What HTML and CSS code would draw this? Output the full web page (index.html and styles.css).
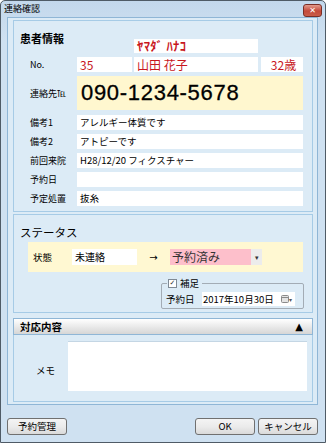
FILE: index.html
```html
<!DOCTYPE html>
<html lang="ja">
<head>
  <meta charset="UTF-8">
  <title>連絡確認</title>
  <link rel="stylesheet" href="styles.css">
</head>
<body>
  <div class="window">
    <div class="titlebar">
      <span class="title">連絡確認</span>
      <span class="close">✕</span>
    </div>

    <div class="client">
      <div class="content">

        <!-- 患者情報 -->
        <section class="panel patient">
          <div class="head-row">
            <h2>患者情報</h2>
            <div class="field kana red">ﾔﾏﾀﾞ ﾊﾅｺ</div>
          </div>
          <div class="row">
            <label>No.</label>
            <div class="field no red">35</div>
            <div class="field name red">山田 花子</div>
            <div class="field age red">32歳</div>
          </div>
          <div class="row tel-row">
            <label>連絡先℡</label>
            <div class="field tel">090-1234-5678</div>
          </div>
          <div class="row first">
            <label>備考1</label>
            <div class="field">アレルギー体質です</div>
          </div>
          <div class="row">
            <label>備考2</label>
            <div class="field">アトピーです</div>
          </div>
          <div class="row">
            <label>前回来院</label>
            <div class="field">H28/12/20 フィクスチャー</div>
          </div>
          <div class="row">
            <label>予約日</label>
            <div class="field"></div>
          </div>
          <div class="row">
            <label>予定処置</label>
            <div class="field">抜糸</div>
          </div>
        </section>

        <!-- ステータス -->
        <section class="panel status">
          <h2 class="plain">ステータス</h2>
          <div class="status-band">
            <span class="status-label">状態</span>
            <div class="field current">未連絡</div>
            <span class="arrow">→</span>
            <div class="combo">
              <div class="combo-value">予約済み</div>
              <div class="combo-btn">▾</div>
            </div>
          </div>
          <div class="groupbox">
            <span class="legend"><span class="check">✓</span>補足</span>
            <span class="gb-label">予約日</span>
            <div class="date-field">
              <span>2017年10月30日</span>
              <span class="cal">
                <svg width="8" height="8" viewBox="0 0 8 8"><rect x="0.5" y="0.5" width="7" height="7" rx="1" fill="#e4e4e4" stroke="#8a8a8a"/><line x1="1" y1="2.5" x2="7" y2="2.5" stroke="#8a8a8a"/></svg>
                <span class="cal-arrow">▾</span>
              </span>
            </div>
          </div>
        </section>

        <!-- 対応内容 -->
        <div class="section-head">
          <span>対応内容</span>
          <span class="toggle">▲</span>
        </div>
        <section class="panel memo">
          <label>メモ</label>
          <div class="textarea"></div>
        </section>

      </div>

      <div class="buttons">
        <button class="btn">予約管理</button>
        <span class="spacer"></span>
        <button class="btn">OK</button>
        <button class="btn">キャンセル</button>
      </div>
    </div>
  </div>
</body>
</html>
```

FILE: styles.css
```css
html, body {
  margin: 0;
  padding: 0;
}

body {
  font-family: "Noto Sans CJK JP", "Noto Sans", sans-serif;
  font-size: 9px;
  color: #000;
  background: #fff;
}

.window {
  width: 326px;
  height: 443px;
  box-sizing: border-box;
  border: 1px solid #4f5b66;
  border-radius: 5px 5px 0 0;
  background: linear-gradient(#c3d8ec, #cfe1f1 40px, #cfe1f1);
  display: flex;
  flex-direction: column;
}

.titlebar {
  height: 16px;
  display: flex;
  align-items: center;
  padding: 0 3px 0 3px;
}

.title {
  flex: 1;
  font-size: 9px;
  line-height: 10px;
  margin-top: -1px;
}

.close {
  width: 17px;
  height: 11px;
  margin-top: 2px;
  border: 1px solid #7a2e26;
  border-radius: 3px;
  background: linear-gradient(#e39b8c, #c4493a 55%, #c95c48);
  color: #fff;
  font-size: 8px;
  font-weight: bold;
  line-height: 11px;
  text-align: center;
  font-family: "DejaVu Sans", sans-serif;
}

.client {
  flex: 1;
  padding: 0 7px 0 6px;
  display: flex;
  flex-direction: column;
}

.content {
  border: 1px solid #8fb6d6;
  background: #dcebf6;
  padding: 2px 4px 2px 5px;
}

.panel {
  border: 1px solid #a6cbe6;
  background: #dcebf6;
}

h2 {
  margin: 0;
  font-size: 11px;
  font-weight: bold;
  line-height: 14px;
}

h2.plain {
  font-weight: normal;
  font-size: 11.5px;
}

.red {
  color: #c8161d;
}

.field {
  background: #fff;
  height: 15px;
  line-height: 15px;
  box-sizing: border-box;
  padding-left: 3px;
  flex: 1;
  font-size: 9.5px;
  white-space: nowrap;
  overflow: hidden;
}

/* 患者情報 */
.patient {
  height: 192px;
  box-sizing: border-box;
  padding: 10px 9px 0 16px;
}

.head-row {
  display: flex;
  align-items: flex-start;
}

.head-row h2 {
  width: 114px;
  margin-left: -10px;
  flex: none;
}

.field.kana {
  flex: none;
  width: 124px;
  height: 14px;
  margin-top: 8px;
  font-size: 12.5px;
  font-weight: bold;
  line-height: 14px;
  letter-spacing: 0.4px;
  overflow: visible;
}

.row {
  display: flex;
  align-items: center;
  margin-top: 4px;
  height: 15px;
}

.row label {
  width: 47px;
  flex: none;
  font-size: 9px;
  white-space: nowrap;
}

.row.first {
  margin-top: 5px;
}

.field.no {
  flex: none;
  width: 55px;
  font-size: 12px;
}

.field.name {
  flex: none;
  width: 124px;
  margin-left: 2px;
  font-size: 12px;
}

.field.age {
  flex: none;
  width: 42px;
  margin-left: 3px;
  font-size: 12px;
  text-align: center;
}

.tel-row {
  height: 34px;
}

.field.tel {
  height: 34px;
  line-height: 34px;
  background: #fff7cf;
  font-family: "Liberation Sans", Arial, sans-serif;
  font-size: 22px;
  letter-spacing: 0.7px;
  padding-left: 4px;
  -webkit-text-stroke: 0.3px #000;
}

/* ステータス */
.status {
  margin-top: 2px;
  height: 99px;
  box-sizing: border-box;
  padding: 10px 0 0 6px;
}

.status-band {
  margin: 3px 0 0 8px;
  width: 275px;
  height: 30px;
  box-sizing: border-box;
  background: #fff8d2;
  display: flex;
  align-items: center;
  padding: 0 0 0 5px;
}

.status-label {
  width: 39px;
  font-size: 9.5px;
}

.field.current {
  flex: none;
  width: 65px;
  height: 16px;
  line-height: 16px;
  font-size: 10px;
}

.arrow {
  width: 33px;
  text-align: center;
  font-size: 10px;
  font-family: "DejaVu Sans", sans-serif;
}

.combo {
  display: flex;
  height: 16px;
}

.combo-value {
  width: 81px;
  background: #fdbfcb;
  font-size: 12px;
  line-height: 16px;
  padding-left: 2px;
  box-sizing: border-box;
  color: #333;
}

.combo-btn {
  width: 11px;
  background: #ececec;
  font-size: 7px;
  line-height: 16px;
  text-align: center;
  color: #333;
}

.groupbox {
  position: relative;
  margin: 11px 0 0 141px;
  width: 143px;
  height: 26px;
  box-sizing: border-box;
  border: 1px solid #a3acb5;
  border-radius: 2px;
  display: flex;
  align-items: center;
  padding: 6px 4px 0 4px;
}

.legend {
  position: absolute;
  top: -6px;
  left: 5px;
  padding: 0 3px 0 1px;
  background: #dcebf6;
  display: flex;
  align-items: center;
  gap: 3px;
  font-size: 9.5px;
  line-height: 10px;
}

.check {
  width: 7px;
  height: 7px;
  border: 1px solid #7f8a95;
  background: #fff;
  font-size: 7px;
  line-height: 7px;
  text-align: center;
  color: #333;
  font-family: "DejaVu Sans", sans-serif;
}

.gb-label {
  width: 36px;
  font-size: 9.5px;
}

.date-field {
  width: 93px;
  height: 14px;
  background: #fff;
  display: flex;
  align-items: center;
  justify-content: space-between;
  padding: 0 3px 0 1px;
  box-sizing: border-box;
  font-size: 9.5px;
  white-space: nowrap;
}

.cal {
  display: flex;
  align-items: center;
}

.cal-arrow {
  font-size: 6px;
  color: #555;
}

/* 対応内容 */
.section-head {
  margin-top: 5px;
  height: 17px;
  box-sizing: border-box;
  border: 1px solid #8fb6d6;
  background: linear-gradient(#ffffff, #e6e6e6 60%, #d6d6d6);
  display: flex;
  align-items: center;
  justify-content: space-between;
  padding: 0 9px 0 6px;
  font-size: 10.5px;
  font-weight: bold;
}

.toggle {
  font-size: 10px;
  font-family: "DejaVu Sans", sans-serif;
}

.memo {
  height: 67px;
  box-sizing: border-box;
  border-top: none;
  display: flex;
  align-items: flex-start;
  padding: 6px 5px 0 22px;
}

.memo label {
  width: 32px;
  margin-top: 22px;
  font-size: 9.5px;
}

.textarea {
  flex: 1;
  height: 50px;
  background: #fff;
  border-top: 1px solid #c4d6e4;
  box-sizing: border-box;
}

/* buttons */
.buttons {
  display: flex;
  margin-top: 13px;
  gap: 3px;
}

.spacer {
  flex: 1;
}

.btn {
  width: 60px;
  height: 17px;
  padding: 0;
  border: 1px solid #707070;
  border-radius: 3px;
  background: linear-gradient(#f4f4f4, #ebebeb 50%, #dadada);
  font-family: "Noto Sans CJK JP", sans-serif;
  font-size: 9.5px;
  line-height: 15px;
  color: #000;
}
```
